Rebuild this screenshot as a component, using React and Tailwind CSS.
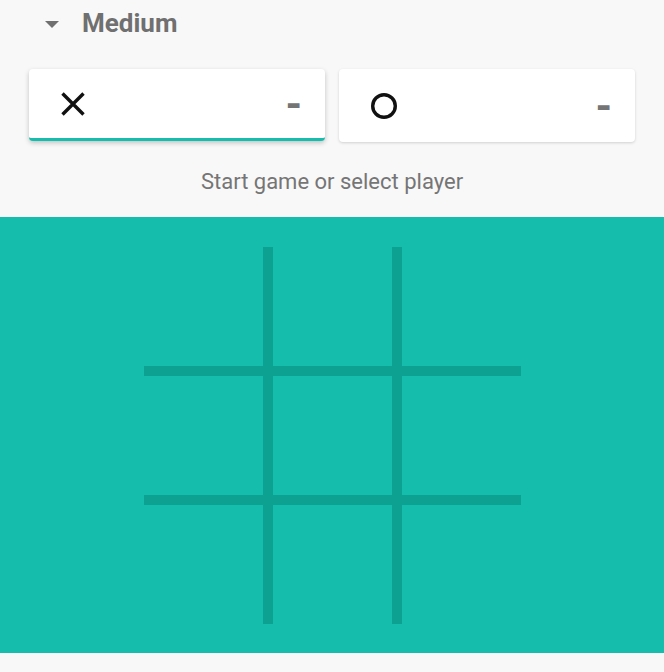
import React from 'react';

const cells = Array.from({ length: 9 }, (_, i) => i);

function XMark() {
  return (
    <svg width="24" height="24" viewBox="0 0 24 24">
      <path d="M1.5 1.5L22.5 22.5M22.5 1.5L1.5 22.5" stroke="#111" strokeWidth="3.4" fill="none" />
    </svg>
  );
}

function OMark() {
  return (
    <svg width="26" height="26" viewBox="0 0 26 26">
      <circle cx="13" cy="13" r="11.3" stroke="#111" strokeWidth="3.4" fill="none" />
    </svg>
  );
}

function PlayerCard({ mark, active }) {
  return (
    <div
      className={
        active
          ? 'flex h-[72px] w-[296px] items-center justify-between rounded-[4px] border-b-[3px] border-[#14bdac] bg-white pl-[32px] pr-[23px] shadow-[0_2px_5px_rgba(0,0,0,0.22)]'
          : 'flex h-[73px] w-[296px] items-center justify-between rounded-[4px] bg-white pl-[32px] pr-[23px] shadow-[0_1px_3px_rgba(0,0,0,0.16)]'
      }
    >
      {mark === 'x' ? <XMark /> : <OMark />}
      <span className="mt-[2px] inline-block text-[42px] font-bold leading-none text-[#757575]">-</span>
    </div>
  );
}

export default function App() {
  return (
    <div className="h-[672px] w-[664px] bg-[#f8f8f8]" style={{ fontFamily: 'Roboto, "Noto Sans", sans-serif' }}>
      {/* difficulty */}
      <div className="flex h-[39px] items-center pl-[45px] pt-[7px]">
        <svg width="14" height="7" viewBox="0 0 14 7" className="mt-[2px]">
          <path d="M0 0H14L7 7Z" fill="#707070" />
        </svg>
        <span className="ml-[23px] text-[26px] font-bold leading-[32px] text-[#707070]">Medium</span>
      </div>

      {/* players */}
      <div className="mt-[30px] flex gap-[14px] px-[29px]">
        <PlayerCard mark="x" active />
        <PlayerCard mark="o" />
      </div>

      <p className="mt-[27px] text-center text-[22px] leading-[26px] text-[#757575]">
        Start game or select player
      </p>

      {/* board */}
      <div className="mt-[22px] h-[436px] bg-[#14bdac] pt-[30px]">
        <div className="mx-auto grid w-[377px] grid-cols-[119px_119px_119px] grid-rows-[119px_119px_119px] gap-[10px] bg-[#0da192]">
          {cells.map((c) => (
            <div key={c} className="bg-[#14bdac]" />
          ))}
        </div>
      </div>
    </div>
  );
}
